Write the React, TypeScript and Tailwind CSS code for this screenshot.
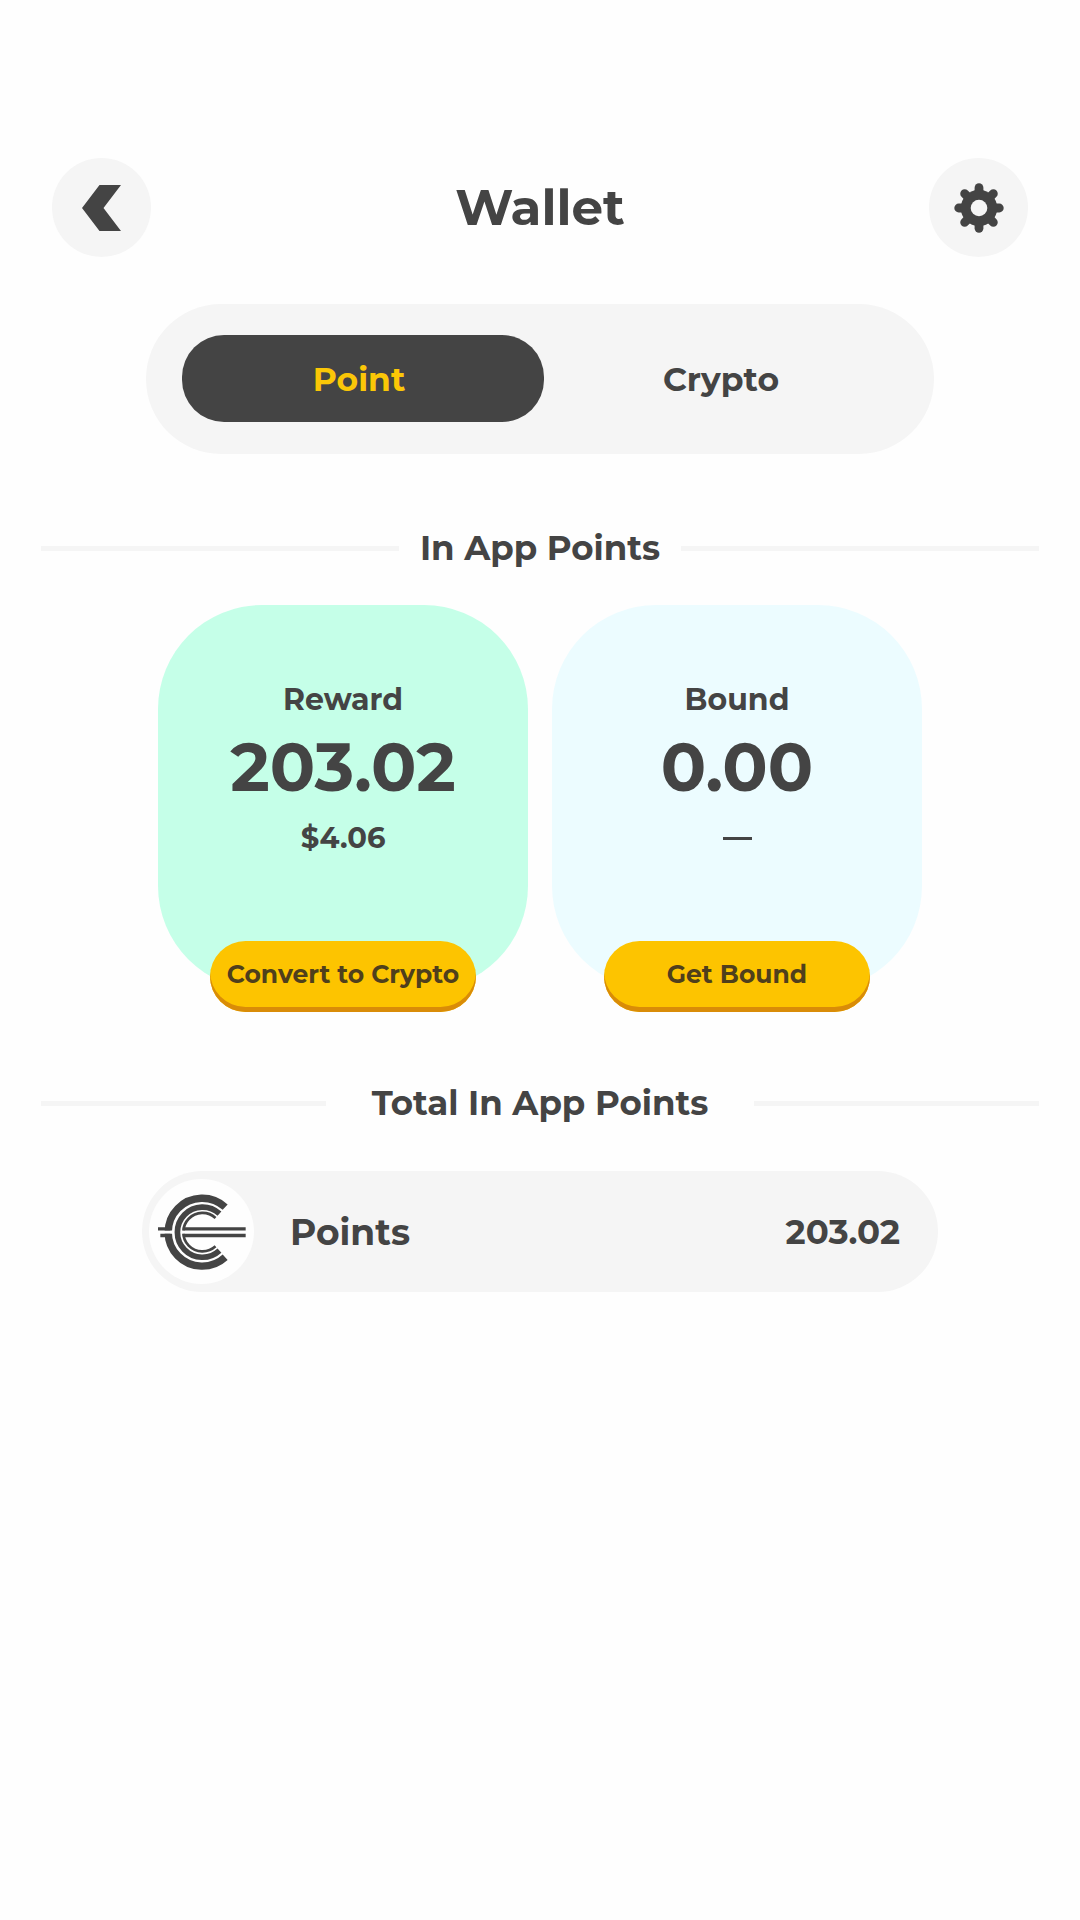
import { useState } from 'react';

const cards = [
    { id: 1, title: 'Reward', amount: '203.02', value: '$4.06', action: 'Convert to Crypto', color: 'bg-[#c5ffe8]' },
    { id: 2, title: 'Bound', amount: '0.00', value: '', action: 'Get Bound', color: 'bg-[#ecfcff]' },
];

const tabs = ['Point', 'Crypto'];

function BackIcon() {
    return (
        <svg viewBox="0 0 39 46" className="h-[46px] w-[39px]" fill="#444444" aria-hidden="true">
            <path d="M17.5 0H39L21.5 23L39 46H17.5L0 23Z" />
        </svg>
    );
}

function GearIcon() {
    const angles = [0, 45, 90, 135];
    return (
        <svg viewBox="-25 -25 50 50" className="size-[50px]" aria-hidden="true">
            {angles.map((angle) => (
                <path
                    key={angle}
                    d="M-20.3 0H20.3"
                    stroke="#444444"
                    strokeWidth="8.8"
                    strokeLinecap="round"
                    transform={`rotate(${angle})`}
                />
            ))}
            <circle r="18.2" fill="#444444" />
            <circle r="8.3" fill="#f5f5f5" />
        </svg>
    );
}

function CoinLogo() {
    return (
        <svg viewBox="83 102 263 227" className="h-[76px] w-[88px]" fill="none" stroke="#444444" aria-hidden="true">
            <path d="M283.7 141.2A101.5 101.5 0 1 0 283.7 290.8" strokeWidth="22" />
            <path d="M254.9 173.6A57.5 57.5 0 1 0 254.9 258.4" strokeWidth="8" />
            <path d="M83 216H346" stroke="#fefefe" strokeWidth="10" />
            <path d="M83 206H120M90 226H120M159 206H345M159 226H345" strokeWidth="10" />
            <path d="M266.7 160.7A75 75 0 1 0 266.7 271.3" strokeWidth="17" />
        </svg>
    );
}

function SectionTitle({ title, width }: { title: string; width: string }) {
    return (
        <div className="flex items-center px-[41px]">
            <span className="h-[5px] flex-1 bg-[#f5f5f5]" />
            <h2 className={`text-center text-[34px] leading-[40px] font-bold ${width}`}>{title}</h2>
            <span className="h-[5px] flex-1 bg-[#f5f5f5]" />
        </div>
    );
}

export default function App() {
    const [activeTab, setActiveTab] = useState('Point');

    return (
        <main className="min-h-screen bg-[#fefefe] pt-[158px] font-['Montserrat','Inter',sans-serif] text-[#444444]">
            <header className="flex items-center justify-between px-[52px]">
                <button aria-label="Back" className="flex size-[99px] items-center justify-center rounded-full bg-[#f5f5f5]">
                    <BackIcon />
                </button>
                <h1 className="text-[50px] leading-[60px] font-bold">Wallet</h1>
                <button aria-label="Settings" className="flex size-[99px] items-center justify-center rounded-full bg-[#f5f5f5]">
                    <GearIcon />
                </button>
            </header>

            <nav className="mx-auto mt-[47px] flex max-w-[788px] rounded-full bg-[#f5f5f5] pt-[31px] pr-[28px] pb-[32px] pl-[36px]">
                {tabs.map((tab) => (
                    <button
                        key={tab}
                        onClick={() => setActiveTab(tab)}
                        className={`h-[87px] flex-1 rounded-[42px] pr-[8px] text-[33px] leading-[40px] font-bold ${
                            activeTab === tab ? 'bg-[#444444] text-[#fbc707]' : ''
                        }`}
                    >
                        {tab}
                    </button>
                ))}
            </nav>

            <section className="mt-[74px]">
                <SectionTitle title="In App Points" width="min-w-[282px]" />
                <div className="mt-[37px] flex justify-center gap-6">
                    {cards.map((card) => (
                        <article
                            key={card.id}
                            className={`flex w-[370px] flex-col items-center rounded-[104px] pt-[77px] ${card.color}`}
                        >
                            <h3 className="text-[30px] leading-[36px] font-bold">{card.title}</h3>
                            <p className="mt-[13px] text-[67px] leading-[72px] font-bold">{card.amount}</p>
                            <p className="mt-[17px] flex h-[36px] items-center text-[29px] leading-[36px] font-bold">
                                {card.value || <span className="h-[3px] w-[29px] bg-[#444444]" />}
                            </p>
                            <button className="mt-[85px] -mb-[22px] h-[71px] w-[266px] rounded-[36px] bg-[#fdc400] pb-[6px] text-[25px] leading-[30px] font-bold text-[#4f3f1c] shadow-[inset_0_-5px_0_#d98c08]">
                                {card.action}
                            </button>
                        </article>
                    ))}
                </div>
            </section>

            <section className="mt-[93px]">
                <SectionTitle title="Total In App Points" width="min-w-[428px]" />
                <div className="mx-auto mt-[48px] flex max-w-[796px] items-center rounded-full bg-[#f5f5f5] py-[8px] pr-[38px] pl-[7px]">
                    <span className="flex size-[105px] items-center justify-center rounded-full bg-[#fefefe]">
                        <CoinLogo />
                    </span>
                    <span className="ml-[36px] text-[36px] leading-[40px] font-bold">Points</span>
                    <span className="ml-auto text-[34px] leading-[40px] font-bold">203.02</span>
                </div>
            </section>
        </main>
    );
}
